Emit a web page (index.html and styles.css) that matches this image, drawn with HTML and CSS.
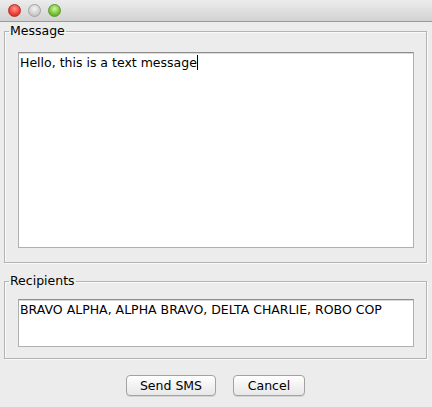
FILE: index.html
```html
<!DOCTYPE html>
<html>
<head>
<meta charset="utf-8">
<link rel="stylesheet" href="styles.css">
</head>
<body>
<div class="window">
  <div class="titlebar">
    <span class="light red"></span>
    <span class="light gray"></span>
    <span class="light green"></span>
  </div>
  <div class="content">
    <fieldset class="group group-message">
      <legend>Message</legend>
      <div class="field field-message">Hello, this is a text message<span class="caret"></span></div>
    </fieldset>
    <fieldset class="group group-recipients">
      <legend>Recipients</legend>
      <div class="field field-recipients">BRAVO ALPHA, ALPHA BRAVO, DELTA CHARLIE, ROBO COP</div>
    </fieldset>
    <div class="buttons">
      <button class="btn btn-send">Send SMS</button>
      <button class="btn btn-cancel">Cancel</button>
    </div>
  </div>
</div>
</body>
</html>
```
FILE: styles.css
```css
html, body {
  margin: 0;
  padding: 0;
  background: #ececec;
}
.window {
  width: 432px;
  height: 407px;
  background: #ececec;
  font-family: "DejaVu Sans", "Liberation Sans", sans-serif;
  font-size: 12.5px;
  color: #000;
  overflow: hidden;
}
.titlebar {
  height: 21px;
  border-bottom: 1px solid #9a9a9a;
  background: linear-gradient(#ececec, #d2d2d2);
  display: flex;
  align-items: center;
  gap: 7px;
  padding-left: 8px;
}
.light {
  width: 13px;
  height: 13px;
  border-radius: 50%;
  box-sizing: border-box;
}
.red {
  background: radial-gradient(circle at 50% 35%, #ff9a8f 0, #f0443a 55%, #c1221b 100%);
  border: 1px solid #b5302a;
}
.gray {
  background: radial-gradient(circle at 50% 35%, #f4f4f4 0, #cfcfcf 60%, #b3b3b3 100%);
  border: 1px solid #a3a3a3;
}
.green {
  background: radial-gradient(circle at 50% 35%, #d2f5a4 0, #7cc63a 55%, #4f9a1b 100%);
  border: 1px solid #5b9a2a;
}
.content {
  padding: 1px 5px 0 4px;
}
.group {
  margin: 0;
  padding: 13px 12px 14px 13px;
  border: 1px solid #b3b3b3;
  box-shadow: 1px 1px 0 #fafafa, inset 1px 1px 0 #fafafa;
}
.group legend {
  padding: 0 1px;
  margin-left: -9px;
  font-size: 12.5px;
  line-height: 16px;
}
.group-message .field-message {
  height: 192px;
}
.group-recipients {
  margin-top: 10px;
  padding-top: 10px;
  padding-bottom: 11px;
}
.field {
  background: #fff;
  border: 1px solid #b0b0b0;
  border-top-color: #8e8e8e;
  box-shadow: inset 0 1px 0 #d9d9d9;
  padding: 2px 2px 0 1px;
  line-height: 16px;
  white-space: nowrap;
}
.field-recipients {
  height: 44px;
}
.caret {
  display: inline-block;
  width: 1px;
  height: 15px;
  background: #000;
  vertical-align: -3px;
}
.buttons {
  display: flex;
  justify-content: center;
  gap: 17px;
  margin-top: 16px;
}
.btn {
  font-family: inherit;
  font-size: 12.5px;
  height: 21px;
  padding: 0;
  border: 1px solid #a2a2a2;
  border-radius: 4px;
  background: linear-gradient(#ffffff, #f0f0f0 60%, #e8e8e8);
  color: #000;
  box-shadow: 0 1px 0 #d4d4d4;
}
.btn-send { width: 90px; }
.btn-cancel { width: 72px; }
```
